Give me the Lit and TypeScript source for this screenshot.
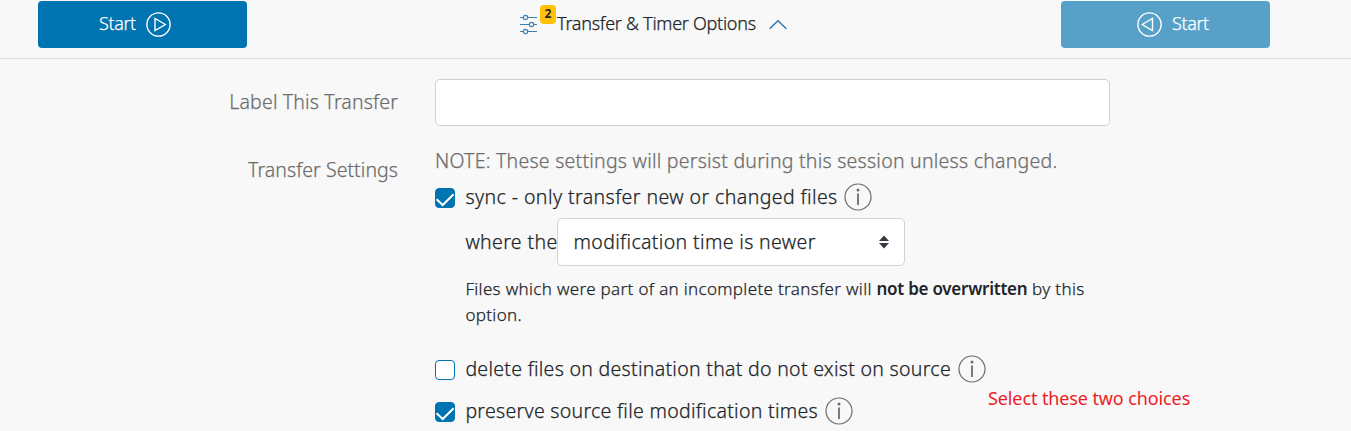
import { LitElement, html, css, svg } from 'lit';
import { customElement, property, state } from 'lit/decorators.js';
import { classMap } from 'lit/directives/class-map.js';

@customElement('info-icon')
class InfoIcon extends LitElement {
  static styles = css`:host { display: block; width: 28px; height: 28px; } svg { display: block; }`;
  render() {
    return html`<svg width="28" height="28" viewBox="0 0 28 28" fill="none" stroke="#6c6c6c">
      <circle cx="14" cy="14" r="13" stroke-width="1.2"/>
      <path d="M14 10.5V22" stroke-width="1.8"/>
      <circle cx="14" cy="6.9" r="1.5" fill="#6c6c6c" stroke="none"/>
    </svg>`;
  }
}

@customElement('check-box')
class CheckBox extends LitElement {
  @property({ type: Boolean }) checked = false;
  static styles = css`
    :host { display: block; width: 20px; height: 20px; }
    .box { box-sizing: border-box; width: 20px; height: 20px; border: 1px solid #0074b0; border-radius: 4px; background: #fff; }
    .on { background: #0074b0; }
    svg { display: block; margin: -1px; }`;
  render() {
    return html`<div class=${classMap({ box: true, on: this.checked })}>
      ${this.checked ? html`<svg width="20" height="20" fill="none" stroke="#fff" stroke-width="2"><path d="M1.6 11.2L7.7 17L18.6 6.2"/></svg>` : ''}
    </div>`;
  }
}

@customElement('start-button')
class StartButton extends LitElement {
  @property({ type: Boolean }) reverse = false;
  static styles = css`
    :host { display: block; }
    button { box-sizing: border-box; width: 209px; height: 47px; border: 0; border-radius: 4px; padding: 0 0 0 61px; display: flex; align-items: center; gap: 10px;
      background: #0074b0; color: #fff; font: 300 18px/24px "Noto Sans", sans-serif; letter-spacing: -0.4px; -webkit-text-stroke: .25px; }
    .reverse { background: #57a1c8; padding-left: 76px; }
    span { margin-top: -3px; }
    svg { display: block; }`;
  render() {
    const label = html`<span>Start</span>`;
    const tri = this.reverse ? svg`<path d="M5.2 12.5L15.5 6.5V18.5Z"/>` : svg`<path d="M19.3 12.5L9 6.5V18.5Z"/>`;
    const icon = html`<svg width="25" height="25" viewBox="0 0 25 25" fill="none" stroke="#fff" stroke-width="1.4"><circle cx="12.5" cy="12.5" r="11.6"/>${tri}</svg>`;
    return html`<button class=${classMap({ reverse: this.reverse })}>${this.reverse ? [icon, label] : [label, icon]}</button>`;
  }
}

@customElement('app-root')
class AppRoot extends LitElement {
  @state() private sync = true;

  static styles = css`
    :host { display: block; height: 431px; overflow: hidden; background: #f8f8f8; color: #212529; font: 300 19.5px/28px "Noto Sans", sans-serif; -webkit-text-stroke: .25px; }
    svg { -webkit-text-stroke: 0; }
    .bar { box-sizing: border-box; height: 59px; padding: 1px 81px 0 38px; display: flex; justify-content: space-between; align-items: flex-start; border-bottom: 1px solid #dfdfdf; }
    .options { display: flex; align-items: flex-start; height: 47px; }
    .sliders { position: relative; width: 37px; height: 40px; }
    .sliders svg { display: block; margin: 13px 0 0 -1px; }
    .badge { position: absolute; left: 20px; top: 4px; width: 16px; height: 19px; border-radius: 4px; background: #ffc107; text-align: center; font-weight: 700; font-size: 12px; line-height: 18px; -webkit-text-stroke: 0; }
    .title { font-size: 18px; line-height: 24px; margin-top: 10px; letter-spacing: -0.27px; white-space: nowrap; width: 212px; }
    .chevron { display: block; margin: 18px 1px 0 0; }
    .form { display: grid; grid-template-columns: 398px 675px; column-gap: 37px; padding-top: 20px; }
    .label { color: #6c6c6c; text-align: right; white-space: nowrap; letter-spacing: .16px; }
    .l1 { padding-top: 9px; }
    .l2 { padding-top: 30px; letter-spacing: .05px; }
    .input { box-sizing: border-box; height: 47px; border: 1px solid #ced0d4; border-radius: 5px; background: #fff; }
    .settings { padding-top: 21px; }
    .note { color: #6c6c6c; letter-spacing: .24px; white-space: nowrap; }
    .row { display: flex; align-items: center; height: 28px; white-space: nowrap; }
    .row check-box { margin: 2px 10.4px 0 0; }
    .row info-icon { margin-left: 6.6px; }
    .row span { letter-spacing: .29px; }
    .row .s1 { letter-spacing: .42px; }
    .r1 { margin-top: 8px; }
    .where { display: flex; padding-left: 30.4px; margin-top: 7px; align-items: center; letter-spacing: .36px; }
    .where > span { width: 91.6px; white-space: nowrap; }
    .select { box-sizing: border-box; width: 348px; height: 48px; border: 1px solid #ced4da; border-radius: 5px; background: #fff; display: flex; align-items: center; justify-content: space-between; padding: 0 15px 0 15.5px; }
    .hint { font-size: 17px; line-height: 26px; padding: 10px 0 0 30.4px; letter-spacing: .33px; white-space: nowrap; }
    .hint b { font-weight: 600; letter-spacing: -.25px; -webkit-text-stroke: 0; }
    .r2 { margin-top: 27px; }
    .r3 { margin-top: 14px; }
    .callout { position: absolute; left: 988px; top: 386px; font-size: 18px; line-height: 24px; font-weight: 400; color: #ed1c24; letter-spacing: -.11px; white-space: nowrap; -webkit-text-stroke: 0; }`;

  render() {
    return html`
      <div class="bar">
        <start-button></start-button>
        <div class="options">
          <div class="sliders">
            <svg width="20" height="22" viewBox="0 0 20 22" fill="none" stroke="#3c80b4" stroke-width="1.2">
              <path d="M1 3.5H4M9 3.5H18M1 10.5H10M15 10.5H18M1 17.5H4M9 17.5H18"/>
              <circle cx="6.5" cy="3.5" r="2.2"/><circle cx="12.5" cy="10.5" r="2.2"/><circle cx="6.5" cy="17.5" r="2.2"/>
            </svg>
            <div class="badge">2</div>
          </div>
          <div class="title">Transfer &amp; Timer Options</div>
          <svg class="chevron" width="18" height="11" fill="none" stroke="#2f77ae" stroke-width="1.5"><path d="M.7 9.7L9 1.7L17.3 9.7"/></svg>
        </div>
        <start-button reverse></start-button>
      </div>
      <div class="form">
        <div class="label l1">Label This Transfer</div>
        <div class="input"></div>
        <div class="label l2">Transfer Settings</div>
        <div class="settings">
          <div class="note">NOTE: These settings will persist during this session unless changed.</div>
          <div class="row r1"><check-box ?checked=${this.sync}></check-box><span class="s1">sync - only transfer new or changed files</span><info-icon></info-icon></div>
          <div class="where"><span>where the</span>
            <div class="select">modification time is newer
              <svg width="10" height="14" viewBox="0 0 10 14" fill="#343a40"><path d="M0 6L5 .5L10 6ZM0 8H10L5 13.5Z"/></svg>
            </div>
          </div>
          <div class="hint">Files which were part of an incomplete transfer will <b>not be overwritten</b> by this<br>option.</div>
          <div class="row r2"><check-box></check-box><span>delete files on destination that do not exist on source</span><info-icon></info-icon></div>
          <div class="row r3"><check-box checked></check-box><span>preserve source file modification times</span><info-icon></info-icon></div>
        </div>
      </div>
      <div class="callout">Select these two choices</div>`;
  }
}
